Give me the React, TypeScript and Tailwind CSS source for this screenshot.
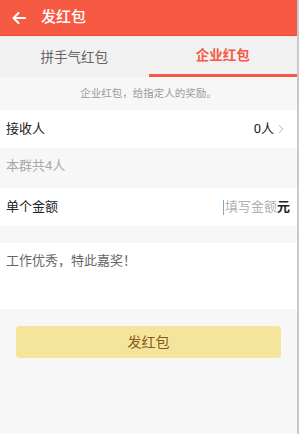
const font = "font-['Roboto','Noto_Sans_CJK_SC',sans-serif]";

export default function App() {
  return (
    <div className={`flex h-[434px] w-[299px] bg-[#c9c9c9] ${font}`}>
      <div className="flex w-[297px] flex-col bg-[#f7f7f7]">
        <div className="flex h-[36px] items-center gap-[14px] border-b border-[#ec4f3a] bg-[#f65a43] pl-[11px] text-white">
          <svg width="16" height="16" viewBox="0 0 16 16" fill="none" stroke="white" strokeWidth="2" strokeLinecap="round" strokeLinejoin="round">
            <path d="M14 8H2.5M7.5 3L2.5 8l5 5" />
          </svg>
          <span className="text-[15px] font-medium">发红包</span>
        </div>
        <div className="h-px bg-[#fbe6e2]" />
        <div className="flex h-[40px] bg-[#f1f1f1] text-[13.5px]">
          <div className="flex flex-1 items-center justify-center text-[#666]">拼手气红包</div>
          <div className="flex flex-1 flex-col items-center">
            <div className="flex flex-1 items-center font-bold text-[#f65a43]">企业红包</div>
            <div className="h-[3px] w-full bg-[#f65a43]" />
          </div>
        </div>
        <div className="flex h-[33px] items-center justify-center text-[10.5px] text-[#9a9a9a]">
          企业红包，给指定人的奖励。
        </div>
        <div className="flex h-[38px] items-center justify-between bg-white pl-[6px] pr-[13px] text-[13px] text-[#222]">
          <span>接收人</span>
          <div className="flex items-center gap-[4px]">
            <span>0人</span>
            <svg width="6" height="10" viewBox="0 0 6 10" fill="none" stroke="#bdbdbd" strokeWidth="1">
              <path d="M1 1l4 4-4 4" />
            </svg>
          </div>
        </div>
        <div className="h-[40px] pl-[6px] pt-[8px] text-[13px] text-[#a8a8a8]">本群共4人</div>
        <div className="flex h-[38px] items-center justify-between bg-white pl-[6px] pr-[7px] text-[13px] text-[#222]">
          <span>单个金额</span>
          <div className="flex items-center">
            <span className="mr-[1px] h-[15px] w-px bg-[#7aa6c8]" />
            <span className="text-[#b0b0b0]">填写金额</span>
            <span className="font-bold">元</span>
          </div>
        </div>
        <div className="mt-[17px] h-[66px] bg-white pl-[6px] pt-[8px] text-[13px] text-[#666]">
          工作优秀，特此嘉奖！
        </div>
        <div className="mt-[17px] px-[16px]">
          <button className="flex h-[32px] w-[265px] items-center justify-center rounded-[4px] bg-[#f5e59c] text-[14px] text-[#8a5a1c]">
            发红包
          </button>
        </div>
      </div>
    </div>
  );
}
